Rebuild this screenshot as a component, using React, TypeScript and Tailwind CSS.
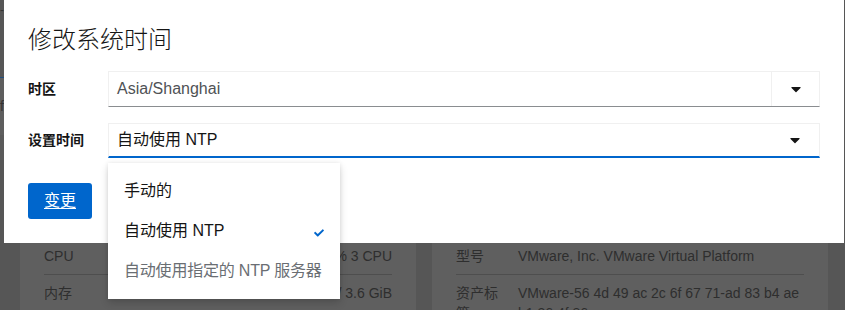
import React from 'react'

const FONT = '"Liberation Sans", "Noto Sans CJK SC", sans-serif'

function Caret() {
  return (
    <svg width="10" height="16" viewBox="0 0 320 512" fill="#151515">
      <path d="M31.3 192h257.3c17.8 0 26.7 21.5 14.1 34.1L174.1 354.8c-7.8 7.8-20.5 7.8-28.3 0L17.2 226.1C4.6 213.5 13.5 192 31.3 192z" />
    </svg>
  )
}

function Check() {
  return (
    <svg width="10" height="10" viewBox="0 0 512 512" fill="#0066cc">
      <path d="M173.898 439.404l-166.4-166.4c-9.997-9.997-9.997-26.206 0-36.204l36.203-36.204c9.997-9.998 26.207-9.998 36.204 0L192 312.69 432.095 72.596c9.997-9.997 26.207-9.997 36.204 0l36.203 36.204c9.997 9.997 9.997 26.206 0 36.204l-294.4 294.401c-9.998 9.997-26.207 9.997-36.204-.001z" />
    </svg>
  )
}

// dimmed page behind the modal
function Backdrop() {
  return (
    <div className="flex h-full text-[14px] leading-5 text-[#2e2e2e]">
      <div className="w-[20px] shrink-0 flex flex-col">
        <div className="h-[77px] pt-[2px] pl-0 text-[#333] text-[12px] leading-4">-</div>
        <div className="h-[1px] bg-[#1f4f7f]" />
        <div className="h-[57px] bg-[#5e5e5e] pt-[18px] text-[#333] leading-5">f</div>
        <div className="h-[25px] bg-[#5a5a5a]" />
      </div>
      <div className="w-[396px] shrink-0 bg-[#5f5f5f] px-6 pt-[238px]">
        <div className="flex justify-between py-2 border-b border-[#4e4e4e]">
          <span>CPU</span>
          <span>0.4% 3 CPU</span>
        </div>
        <div className="flex justify-between py-2">
          <span>内存</span>
          <span>0.9 / 3.6 GiB</span>
        </div>
      </div>
      <div className="w-[396px] shrink-0 ml-4 bg-[#5f5f5f] px-6 pt-[238px]">
        <div className="flex gap-[14px] py-2 border-b border-[#4e4e4e]">
          <span className="w-[48px] shrink-0">型号</span>
          <span>VMware, Inc. VMware Virtual Platform</span>
        </div>
        <div className="flex gap-[14px] py-2">
          <span className="w-[48px] shrink-0">资产标签</span>
          <span>
            <span className="block whitespace-nowrap">VMware-56 4d 49 ac 2c 6f 67 71-ad 83 b4 ae</span>
            <span className="block whitespace-nowrap">b1 36 4f 86</span>
          </span>
        </div>
      </div>
    </div>
  )
}

export default function App() {
  return (
    <div className="relative w-[845px] h-[310px] overflow-hidden bg-[#565656]" style={{ fontFamily: FONT }}>
      <Backdrop />

      <div className="absolute left-[4px] top-0 w-[840px] h-[243px] bg-white px-6 pt-[25px] text-[#151515]">
        <h1 className="text-[24px] leading-[30px] font-light">修改系统时间</h1>

        <div className="mt-4 flex flex-col gap-4">
          <div className="flex items-center">
            <label className="w-[80px] shrink-0 text-[14px] font-semibold">时区</label>
            <div className="flex-1 flex h-[36px] border border-[#f0f0f0] border-b-[#8a8d90]">
              <div className="flex-1 flex items-center pl-2 text-[16px] text-[#4f5255]">Asia/Shanghai</div>
              <div className="w-[48px] flex items-center justify-center border-l border-[#f0f0f0]">
                <Caret />
              </div>
            </div>
          </div>

          <div className="flex items-center">
            <label className="w-[80px] shrink-0 text-[14px] font-semibold">设置时间</label>
            <div className="flex-1 flex h-[35px] border border-[#f0f0f0] border-b-2 border-b-[#0066cc]">
              <div className="flex-1 flex items-center pl-2 text-[16px]">自动使用 NTP</div>
              <div className="w-[48px] flex items-center justify-center">
                <Caret />
              </div>
            </div>
          </div>
        </div>

        <button className="mt-[25px] h-[36px] px-4 rounded-[3px] bg-[#0066cc] text-white text-[16px] underline underline-offset-2">
          变更
        </button>
      </div>

      <div className="absolute left-[108px] top-[163px] w-[232px] py-2 bg-white text-[16px] leading-6 whitespace-nowrap shadow-[0_4px_8px_0_rgba(3,3,3,0.16),0_0_4px_0_rgba(3,3,3,0.08)]">
        <div className="px-4 py-2 text-[#151515]">手动的</div>
        <div className="px-4 py-2 flex items-center justify-between text-[#151515]">
          <span>自动使用 NTP</span>
          <span className="mt-[4px]"><Check /></span>
        </div>
        <div className="pl-4 py-2 text-[#6a6e73] tracking-[-0.2px]">自动使用指定的 NTP 服务器</div>
      </div>
    </div>
  )
}
